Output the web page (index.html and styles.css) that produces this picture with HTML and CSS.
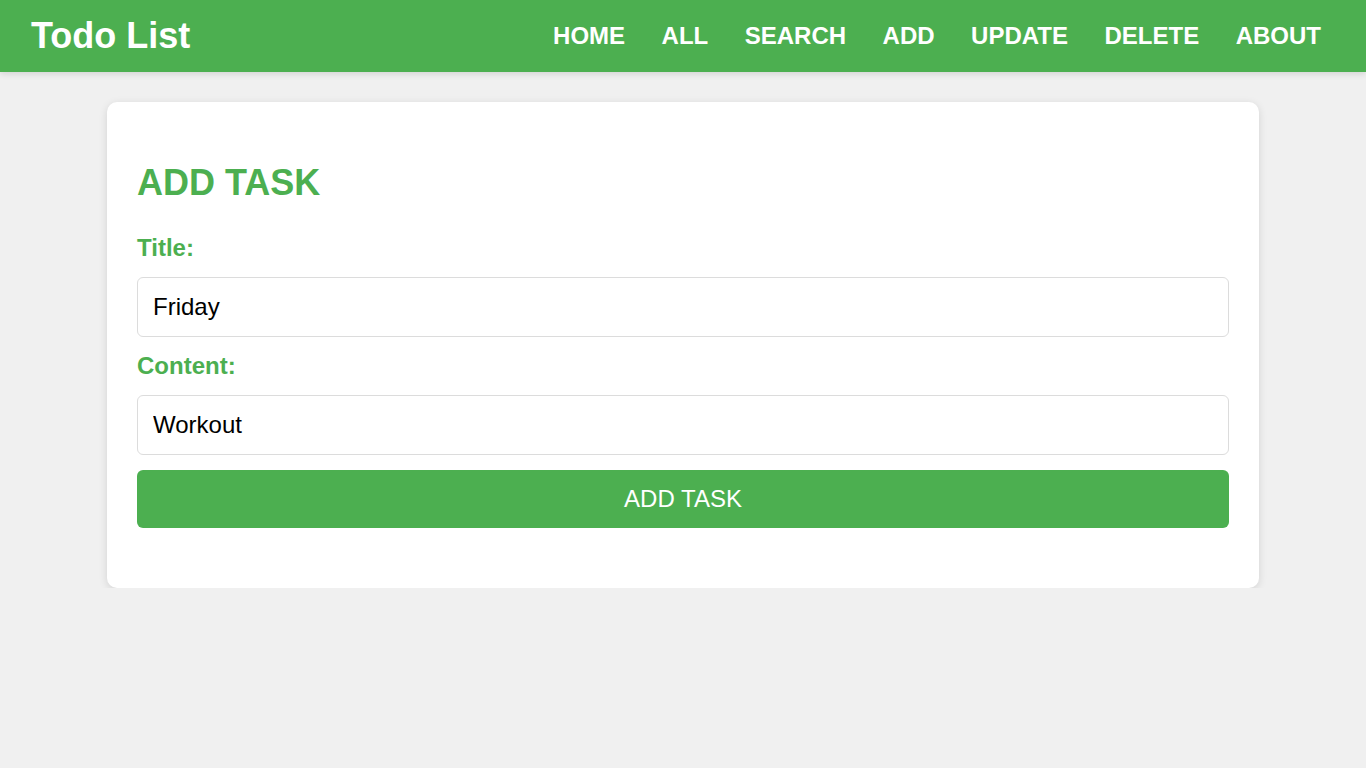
FILE: index.html
```html
<!DOCTYPE html>
<html lang="en">
<head>
<meta charset="utf-8">
<title>Todo List</title>
<link rel="stylesheet" href="styles.css">
</head>
<body>
<header class="topbar">
  <div class="brand">Todo List</div>
  <nav class="nav">
    <a class="nav-link" href="#">HOME</a>
    <a class="nav-link" href="#">ALL</a>
    <a class="nav-link" href="#">SEARCH</a>
    <a class="nav-link" href="#">ADD</a>
    <a class="nav-link" href="#">UPDATE</a>
    <a class="nav-link" href="#">DELETE</a>
    <a class="nav-link" href="#">ABOUT</a>
  </nav>
</header>
<main class="card">
  <h2 class="card-title">ADD TASK</h2>
  <form class="form">
    <label class="field-label" for="title">Title:</label>
    <input class="field-input" id="title" type="text" value="Friday">
    <label class="field-label" for="content">Content:</label>
    <input class="field-input" id="content" type="text" value="Workout">
    <button class="submit" type="button">ADD TASK</button>
  </form>
</main>
</body>
</html>
```
FILE: styles.css
```css
* { box-sizing: border-box; }
html, body {
  margin: 0;
  padding: 0;
  background: #f0f0f0;
  font-family: "Liberation Sans", Arial, sans-serif;
}
.topbar {
  height: 72px;
  background: #4caf50;
  display: flex;
  align-items: center;
  justify-content: space-between;
  padding: 0 45px 0 31px;
  box-shadow: 0 2px 6px rgba(0, 0, 0, 0.12);
}
.brand {
  color: #fff;
  font-size: 36px;
  font-weight: bold;
}
.nav {
  display: flex;
  gap: 36.5px;
}
.nav-link {
  color: #fff;
  text-decoration: none;
  font-size: 24px;
  font-weight: bold;
}
.card {
  width: 1152px;
  margin: 30px auto 0;
  background: #fff;
  border-radius: 10px;
  padding: 30px;
  box-shadow: 0 2px 8px rgba(0, 0, 0, 0.12);
}
.card-title {
  margin: 31px 0 0;
  color: #4caf50;
  font-size: 36px;
  font-weight: bold;
  line-height: 40px;
}
.form {
  display: flex;
  flex-direction: column;
  margin-top: 31px;
  margin-bottom: 30px;
}
.field-label {
  color: #4caf50;
  font-size: 24px;
  font-weight: bold;
  line-height: 27px;
  margin-bottom: 16px;
}
.field-input {
  height: 60px;
  border: 1px solid #dcdcdc;
  border-radius: 6px;
  padding: 0 15px;
  font-family: "Liberation Sans", Arial, sans-serif;
  font-size: 24px;
  color: #000;
  margin-bottom: 15px;
  outline: none;
}
.submit {
  height: 58px;
  background: #4caf50;
  color: #fff;
  border: none;
  border-radius: 6px;
  font-family: "Liberation Sans", Arial, sans-serif;
  font-size: 24px;
}
```
